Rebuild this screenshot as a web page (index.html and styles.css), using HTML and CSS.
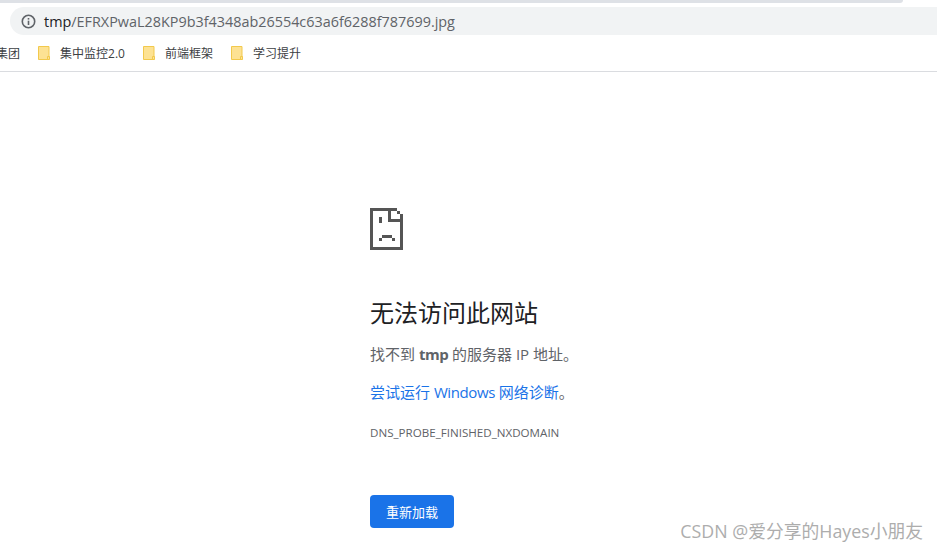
FILE: index.html

```html
<!DOCTYPE html>
<html>
<head>
<meta charset="UTF-8">
<title>tmp</title>
<link rel="stylesheet" href="styles.css">
</head>
<body>
  <div class="tabstrip"></div>
  <div class="toolbar">
    <div class="omnibox">
      <svg class="info-icon" width="15" height="15" viewBox="0 0 15 15">
        <circle cx="7.5" cy="7.5" r="6.2" fill="none" stroke="#5f6368" stroke-width="1.6"/>
        <rect x="6.700" y="6.700" width="1.6" height="4.300" fill="#5f6368"/>
        <rect x="6.700" y="4" width="1.6" height="1.6" fill="#5f6368"/>
      </svg>
      <span class="url"><span class="host">tmp</span>/EFRXPwaL28KP9b3f4348ab26554c63a6f6288f787699.jpg</span>
    </div>
  </div>
  <div class="bookmarks">
    <span class="bookmark first">集团</span>
    <span class="bookmark">
      <svg class="folder" width="12" height="14" viewBox="0 0 12 14"><path d="M.5.5h10.500v13H.5z" fill="#fde293" stroke="#f2c94c"/><path d="M9.500 10.500h2v3h-2z" fill="#fde293" stroke="#f2c94c"/></svg>
      集中监控2.0
    </span>
    <span class="bookmark">
      <svg class="folder" width="12" height="14" viewBox="0 0 12 14"><path d="M.5.5h10.500v13H.5z" fill="#fde293" stroke="#f2c94c"/><path d="M9.500 10.500h2v3h-2z" fill="#fde293" stroke="#f2c94c"/></svg>
      前端框架
    </span>
    <span class="bookmark">
      <svg class="folder" width="12" height="14" viewBox="0 0 12 14"><path d="M.5.5h10.500v13H.5z" fill="#fde293" stroke="#f2c94c"/><path d="M9.500 10.500h2v3h-2z" fill="#fde293" stroke="#f2c94c"/></svg>
      学习提升
    </span>
  </div>

  <div class="error-page">
    <svg class="sad-file" width="33" height="42" viewBox="0 0 33 42" shape-rendering="crispEdges">
      <path fill="#555" d="M0 0h27v3h3v3h3v36H0zM3 3v36h27V14H18V3zM21 3v8h9V6h-3V3z"/>
      <path fill="#555" d="M9 9h3v6H9zM12 27h10v3H12zM9 30h3v3H9zM22 30h3v3h-3z"/>
    </svg>
    <h1>无法访问此网站</h1>
    <p class="summary">找不到 <strong>tmp</strong> 的服务器 IP 地址。</p>
    <p class="suggestion"><a href="#">尝试运行 <span class="latin">Windows</span> 网络诊断</a>。</p>
    <p class="error-code">DNS_PROBE_FINISHED_NXDOMAIN</p>
    <button class="reload">重新加载</button>
  </div>

  <div class="watermark">CSDN @爱分享的Hayes小朋友</div>
</body>
</html>
```

FILE: styles.css

```css
html, body {
  height: 100%;
}

body {
  margin: 0;
  background: #fff;
  font-family: "Open Sans", "Noto Sans CJK SC", sans-serif;
  color: #5f6368;
  overflow: hidden;
  position: relative;
}

.tabstrip {
  height: 3px;
  width: 903px;
  background: #dee1e6;
  border-bottom-right-radius: 4px;
}

.toolbar {
  padding: 4px 0 0 10px;
}

.omnibox {
  height: 28px;
  background: #f1f3f4;
  border-radius: 14px 0 0 14px;
  display: flex;
  align-items: center;
  padding-left: 11px;
  font-size: 14.4px;
}

.info-icon {
  margin-right: 8px;
}

.url {
  color: #5f6368;
  white-space: nowrap;
}

.host {
  color: #202124;
}

.bookmarks {
  height: 36px;
  border-bottom: 1px solid #dadce0;
  display: flex;
  align-items: center;
  font-size: 12px;
  color: #3c4043;
  overflow: hidden;
}

.bookmark {
  display: flex;
  align-items: center;
  white-space: nowrap;
  margin-right: 18px;
}

.bookmark.first {
  margin-left: -4px;
}

.folder {
  margin-right: 10px;
}

.error-page {
  margin-left: 370px;
  padding-top: 136px;
}

.sad-file {
  display: block;
}

h1 {
  margin: 47px 0 0;
  font-size: 24px;
  font-weight: 400;
  line-height: 32px;
  color: #202124;
}

p {
  margin: 0;
  font-size: 15px;
}

.summary {
  margin-top: 15px;
  line-height: 20px;
}

.summary strong {
  letter-spacing: -0.5px;
}

.suggestion {
  margin-top: 18px;
  line-height: 20px;
}

.suggestion a {
  color: #1a73e8;
  text-decoration: none;
}

.latin {
  letter-spacing: -0.4px;
}

.error-code {
  margin-top: 23px;
  font-size: 11.6px;
  line-height: 16px;
}

.reload {
  display: block;
  margin-top: 54px;
  width: 84px;
  height: 33px;
  background: #1a73e8;
  border: none;
  border-radius: 4px;
  color: #fff;
  font-family: inherit;
  font-size: 13px;
  padding: 0;
}

/* blog watermark over the page */
.watermark {
  position: absolute;
  right: 14px;
  top: 519px;
  font-size: 17.8px;
  line-height: 24px;
  color: #adadad;
  white-space: nowrap;
}
```
